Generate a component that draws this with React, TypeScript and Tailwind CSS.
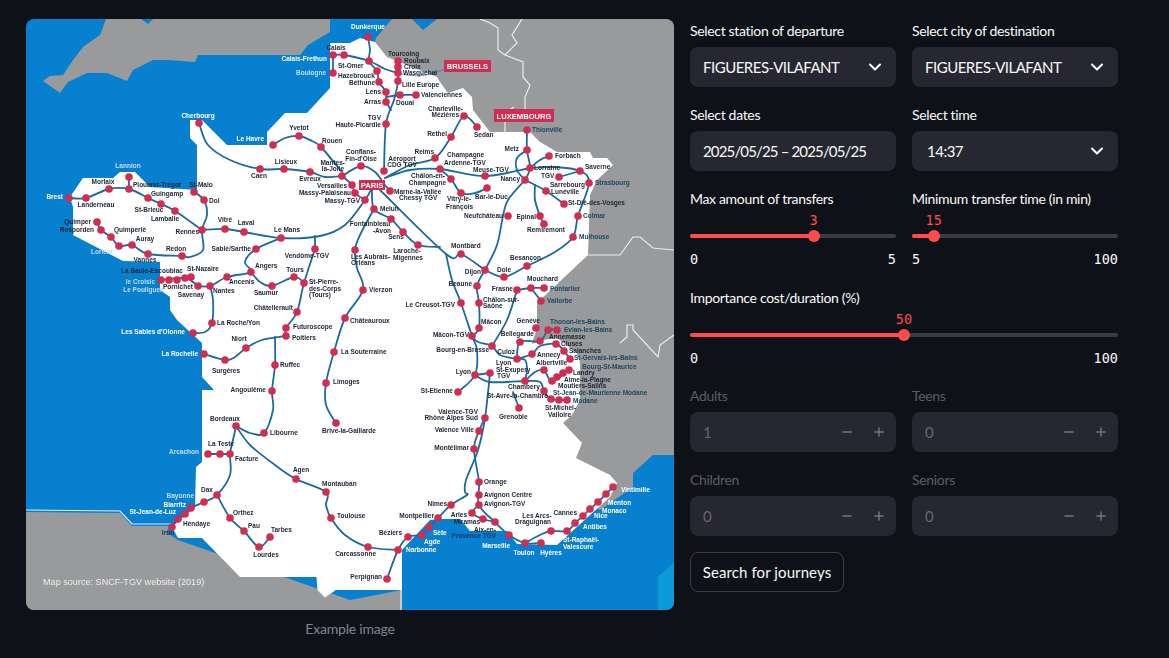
import { ChevronDown, Minus, Plus } from "lucide-react";

type Pt = [number, number];
type Label = [string, number, number, "start" | "middle" | "end", string?];

const WHITE = "#ffffff";
const PALE = "#c4dff3";
const SLATE = "#1d4660";

const land =
  "350,43 360,38 375,42 387,57 437,77 440,82 448,93 463,88 472,97 473,110 490,132 530,132 540,142 557,152 590,152 593,158 607,158 613,165 597,180 590,195 588,255 537,303 537,330 534,337 532,344 543,340 557,338 577,353 580,362 580,400 572,415 563,423 582,443 576,458 610,475 617,483 610,497 557,545 517,544 507,531 470,531 460,519 440,519 430,520 402,550 402,590 335,590 325,597 318,590 317,577 240,577 202,538 178,538 172,527 195,507 196,467 202,462 202,390 214,390 202,377 202,343 177,320 170,310 170,297 160,290 160,262 123,261 73,235 73,207 70,197 83,178 113,178 120,172 135,172 150,187 197,190 197,145 190,138 190,120 202,120 227,145 267,145 267,132 285,113 307,113 330,88 330,43";

const routes: Pt[][] = [
  [[333, 55], [344, 55], [369, 61], [385, 69], [398, 73]],
  [[333, 55], [333, 73]],
  [[368, 37], [370, 50], [369, 61], [377, 71], [379, 82], [386, 92], [386, 102]],
  [[398, 61], [398, 81], [394, 100], [386, 124], [384, 171]],
  [[386, 102], [391, 110]],
  [[386, 97], [400, 95], [416, 95]],
  [[273, 145], [285, 138], [299, 136], [312, 141], [321, 147], [342, 172]],
  [[199, 123], [208, 145], [230, 160], [260, 169], [284, 169], [310, 172], [325, 177], [342, 176]],
  [[342, 176], [361, 166], [375, 172], [384, 184], [390, 191]],
  [[342, 176], [352, 185], [355, 193], [365, 200]],
  [[372, 188], [365, 200], [345, 225], [320, 236], [281, 238], [244, 232], [225, 229], [202, 230]],
  [[69, 198], [86, 198], [109, 189], [129, 189], [148, 198], [161, 204], [175, 211], [202, 230]],
  [[129, 177], [129, 189]],
  [[194, 192], [204, 200], [207, 215], [202, 230], [203, 250], [190, 257], [182, 256], [148, 254], [132, 245], [119, 246], [111, 237], [101, 230], [97, 222]],
  [[281, 238], [256, 249], [245, 262], [251, 272], [227, 277], [210, 286], [198, 286]],
  [[198, 286], [185, 278], [161, 280]],
  [[191, 277], [185, 278]],
  [[251, 272], [260, 282], [272, 286], [294, 277], [304, 283]],
  [[315, 236], [315, 249]],
  [[315, 249], [304, 283], [297, 312], [286, 328], [286, 336]],
  [[286, 336], [262, 340], [246, 348], [235, 357], [225, 360], [204, 354]],
  [[275, 337], [275, 365], [272, 391], [273, 410], [264, 433], [250, 433], [236, 426]],
  [[236, 426], [250, 445], [275, 465], [296, 479], [326, 492], [326, 505], [331, 518], [345, 535], [368, 547], [398, 550]],
  [[236, 426], [233, 440], [230, 454], [230, 475], [217, 495], [204, 502], [191, 508], [185, 514], [178, 519], [172, 527]],
  [[208, 454], [230, 454]],
  [[217, 495], [230, 518], [244, 531], [259, 547], [270, 537]],
  [[210, 286], [213, 300], [212, 323], [205, 332], [193, 333]],
  [[374, 209], [360, 235], [355, 250], [357, 268], [363, 290], [345, 318], [334, 352], [326, 383], [326, 405], [336, 423]],
  [[372, 188], [374, 209], [391, 219], [403, 232], [418, 245], [440, 247]],
  [[378, 188], [446, 254], [461, 254], [485, 270]],
  [[446, 254], [452, 280], [461, 303], [472, 336], [477, 350], [475, 375], [458, 392]],
  [[385, 178], [410, 165], [435, 158], [451, 137], [464, 116], [477, 127]],
  [[385, 178], [410, 170], [440, 169], [485, 176], [530, 168]],
  [[440, 169], [451, 179], [461, 193], [475, 193], [487, 188]],
  [[527, 130], [527, 150], [530, 168], [525, 180]],
  [[527, 150], [517, 158], [517, 170], [525, 180]],
  [[530, 168], [540, 160], [549, 156]],
  [[530, 168], [555, 167], [580, 171], [589, 183], [578, 216], [573, 237], [555, 252], [527, 266], [504, 277], [485, 270]],
  [[580, 171], [559, 177]],
  [[525, 180], [546, 191], [564, 204]],
  [[535, 185], [535, 200], [540, 216], [544, 224]],
  [[525, 180], [508, 200], [503, 216], [497, 245], [485, 270]],
  [[485, 270], [477, 286], [479, 303], [479, 328], [472, 336]],
  [[517, 290], [507, 320], [492, 346]],
  [[517, 290], [531, 288], [544, 288]],
  [[531, 288], [541, 301]],
  [[472, 336], [478, 342], [492, 346], [500, 355], [517, 359]],
  [[517, 359], [520, 342], [540, 341], [548, 330], [557, 330]],
  [[517, 359], [532, 354], [540, 346], [556, 344], [564, 351], [570, 359]],
  [[517, 359], [525, 360], [527, 370], [525, 381]],
  [[475, 375], [490, 373]],
  [[475, 375], [490, 382], [525, 381]],
  [[525, 381], [535, 372], [544, 370], [552, 381], [569, 370]],
  [[525, 381], [540, 382], [544, 391], [551, 399], [567, 400]],
  [[513, 392], [519, 408]],
  [[490, 373], [485, 418], [478, 450], [466, 480], [465, 492], [467, 495], [451, 505], [438, 518], [429, 527], [422, 535], [408, 537], [398, 550], [387, 579]],
  [[485, 418], [479, 431], [474, 449], [479, 482], [479, 505], [495, 522], [509, 535], [525, 543], [541, 543]],
  [[479, 505], [472, 513], [483, 519], [495, 522]],
  [[525, 543], [540, 535], [551, 531], [567, 531], [575, 523], [583, 516], [590, 509], [598, 502], [606, 494], [613, 487]],
];

const stations: Pt[] = [
  [333, 55], [344, 55], [333, 73], [199, 123], [273, 145], [299, 136], [321, 147], [260, 169], [284, 169], [310, 172], [342, 176],
  [69, 198], [86, 198], [109, 189], [129, 177], [129, 189], [148, 198], [161, 204], [175, 211], [194, 192], [204, 200], [202, 230],
  [225, 229], [244, 232], [281, 238], [97, 222], [101, 230], [111, 237], [119, 246], [132, 245], [148, 254], [182, 256], [256, 249],
  [315, 249], [251, 272], [294, 277], [304, 283], [272, 286], [227, 277], [210, 286], [198, 286], [191, 277], [185, 278], [177, 280],
  [169, 280], [161, 280], [297, 312], [212, 323], [193, 333], [204, 354], [225, 360], [246, 348], [286, 328], [286, 336], [275, 365],
  [272, 391], [264, 433], [236, 426], [208, 454], [220, 454], [230, 454], [296, 479], [326, 492], [331, 518], [217, 495], [204, 502],
  [191, 508], [185, 514], [178, 519], [172, 527], [230, 518], [244, 531], [259, 547], [270, 537], [334, 352], [326, 383], [336, 423],
  [345, 318], [363, 290], [355, 250], [374, 209], [391, 219], [403, 232], [418, 245], [365, 200], [355, 193], [352, 185], [361, 166],
  [384, 171], [390, 191], [386, 124], [368, 37], [369, 61], [377, 71], [379, 82], [386, 92], [386, 102], [400, 95], [416, 95], [398, 61],
  [398, 67], [398, 73], [398, 81], [464, 116], [477, 127], [451, 137], [435, 158], [440, 169], [451, 179], [461, 193], [487, 188],
  [485, 176], [530, 168], [525, 180], [527, 150], [527, 130], [549, 156], [580, 171], [559, 177], [589, 183], [546, 191], [564, 204],
  [578, 216], [573, 237], [540, 216], [544, 224], [508, 216], [461, 254], [485, 270], [504, 277], [527, 266], [477, 286], [517, 290],
  [531, 288], [544, 288], [541, 301], [479, 303], [461, 303], [479, 328], [472, 336], [492, 346], [536, 328], [548, 330], [557, 330],
  [520, 342], [540, 341], [556, 344], [564, 351], [570, 359], [532, 354], [517, 359], [544, 370], [569, 370], [563, 373], [557, 377],
  [552, 381], [525, 381], [544, 391], [567, 400], [559, 400], [551, 399], [519, 408], [475, 375], [490, 373], [458, 392], [485, 418],
  [479, 431], [474, 449], [479, 482], [479, 495], [479, 505], [451, 505], [472, 513], [483, 519], [495, 522], [438, 518], [429, 527],
  [422, 535], [408, 537], [398, 550], [368, 547], [387, 579], [509, 535], [525, 543], [541, 543], [551, 531], [567, 531], [575, 523],
  [583, 516], [590, 509], [598, 502], [606, 494], [613, 487],
];

const labels: Label[] = [
  ["Dunkerque", 368, 29, "middle", WHITE], ["Calais", 336, 50, "middle"], ["Calais-Frethun", 327, 61, "end", WHITE], ["Boulogne", 326, 75, "end", PALE],
  ["St-Omer", 338, 68, "start"], ["Hazebrouck", 338, 78, "start"], ["Béthune", 349, 85, "start"], ["Lens", 381, 94, "end"], ["Arras", 381, 104, "end"],
  ["Douai", 396, 105, "start"], ["Valenciennes", 421, 97, "start"], ["Tourcoing", 388, 56, "start"], ["Roubaix", 404, 63, "start"], ["Croix", 404, 69, "start"],
  ["Wasquehal", 403, 75, "start"], ["Lille Europe", 402, 87, "start"], ["TGV", 381, 120, "end"], ["Haute-Picardie", 381, 127, "end"],
  ["Charleville-", 463, 111, "end"], ["Mézières", 459, 117, "end"], ["Sedan", 474, 137, "start"], ["Rethel", 447, 136, "end"], ["Reims", 434, 154, "end"],
  ["Champagne", 447, 157, "start"], ["Ardenne-TGV", 444, 165, "start"], ["Châlon-en-", 445, 178, "end"], ["Champagne", 446, 185, "end"],
  ["Vitry-le-", 447, 201, "start"], ["François", 446, 209, "start"], ["Bar-le-Duc", 475, 199, "start"], ["Meuse-TGV", 473, 172, "start"], ["Metz", 519, 151, "end"],
  ["Thionville", 532, 132, "start", SLATE], ["Forbach", 555, 158, "start"], ["Lorraine", 534, 170, "start"], ["TGV", 541, 178, "start"], ["Nancy", 520, 181, "end"],
  ["Saverne", 585, 169, "start"], ["Strasbourg", 595, 185, "start", SLATE], ["Sarrebourg", 550, 187, "start"], ["Lunéville", 551, 194, "start"],
  ["St-Dié-des-Vosges", 568, 205, "start"], ["Colmar", 583, 218, "start", SLATE], ["Mulhouse", 579, 239, "start", SLATE], ["Epinal", 536, 219, "end"],
  ["Remiremont", 565, 232, "end"], ["Neufchâteau", 503, 218, "end"], ["Montbard", 451, 248, "start"], ["Besançon", 510, 260, "start"], ["Dole", 497, 272, "start"],
  ["Dijon", 481, 274, "end"], ["Beaune", 472, 286, "end"], ["Mouchard", 527, 281, "start"], ["Frasne", 513, 291, "end"], ["Pontarlier", 550, 291, "start", SLATE],
  ["Vallorbe", 547, 303, "start", SLATE], ["Châlon-sur-", 483, 302, "start"], ["Saône", 483, 308, "start"], ["Le Creusot-TGV", 455, 307, "end"], ["Mâcon", 481, 324, "start"],
  ["Mâcon-TGV", 469, 337, "end"], ["Bourg-en-Bresse", 489, 352, "end"], ["Genève", 540, 323, "end"], ["Thonon-les-Bains", 550, 324, "start", SLATE],
  ["Evian-les-Bains", 564, 332, "start", SLATE], ["Annemasse", 549, 339, "start"], ["Bellegarde", 534, 336, "end"], ["Cluses", 561, 346, "start"], ["Salanches", 569, 353, "start"],
  ["St-Gervais-les-Bains", 574, 360, "start", SLATE], ["Annecy", 537, 357, "start"], ["Culoz", 515, 354, "end"], ["Albertville", 536, 365, "start"],
  ["Bourg-St-Maurice", 582, 369, "start", SLATE], ["Landry", 573, 375, "start"], ["Aime-la-Plagne", 564, 382, "start"], ["Moutiers-Salins", 558, 388, "start"],
  ["St-Jean-de-Maurienne Modane", 553, 395, "start", SLATE], ["Modane", 573, 403, "start", SLATE], ["St-Michel-", 545, 410, "start"], ["Valloire", 548, 417, "start"],
  ["Lyon", 496, 365, "start"], ["St-Exupery", 496, 372, "start"], ["TGV", 497, 378, "start"], ["Lyon", 471, 374, "end"], ["Chambery", 508, 389, "start"],
  ["St-Avre-la-Chambre", 487, 398, "start"], ["Grenoble", 499, 419, "start"], ["St-Etienne", 453, 393, "end"], ["Valence-TGV", 478, 414, "end"], ["Rhône Alpes Sud", 478, 420, "end"],
  ["Valence Ville", 474, 432, "end"], ["Montélimar", 469, 450, "end"], ["Orange", 484, 484, "start"], ["Avignon Centre", 484, 497, "start"], ["Avignon-TGV", 484, 506, "start"],
  ["Nîmes", 447, 506, "end"], ["Montpellier", 434, 518, "end"], ["Arles", 467, 517, "end"], ["Miramas", 480, 524, "end"], ["Aix-en-", 496, 532, "end"], ["Provence TGV", 496, 538, "end", "#0d3c66"],
  ["Béziers", 402, 535, "end"], ["Narbonne", 406, 552, "start", WHITE], ["Sète", 433, 535, "start", WHITE], ["Agde", 424, 544, "start", WHITE], ["Carcassonne", 376, 556, "end"],
  ["Perpignan", 382, 579, "end"], ["Marseille", 510, 548, "end", WHITE], ["Toulon", 524, 555, "middle", WHITE], ["Hyères", 551, 555, "middle", WHITE], ["Les Arcs-", 537, 518, "middle"],
  ["Draguignan", 533, 524, "middle"], ["Cannes", 577, 515, "end"], ["St-Raphaël-", 563, 542, "start", WHITE], ["Valescure", 563, 549, "start", WHITE], ["Antibes", 583, 529, "start", WHITE],
  ["Nice", 594, 518, "start", WHITE], ["Monaco", 602, 513, "start", WHITE], ["Menton", 608, 505, "start", WHITE], ["Vintimille", 621, 492, "start", WHITE],
  ["Cherbourg", 198, 118, "middle", WHITE], ["Le Havre", 264, 141, "end", WHITE], ["Yvetot", 299, 130, "middle"], ["Rouen", 322, 143, "start"], ["Lisieux", 286, 164, "middle"],
  ["Caen", 259, 178, "middle"], ["Evreux", 310, 181, "middle"], ["Mantes-", 345, 165, "end"], ["la-Jolie", 344, 171, "end"], ["Conflans-", 361, 154, "middle"], ["Fin-d'Oise", 361, 161, "middle"],
  ["Aéroport", 402, 161, "middle"], ["CDG TGV", 402, 167, "middle"], ["Versailles", 347, 188, "end"], ["Massy-Palaiseau", 351, 195, "end"], ["Massy-TGV", 360, 203, "end"],
  ["Marne-la-Vallée", 394, 194, "start"], ["Chessy TGV", 399, 200, "start"], ["Melun", 380, 211, "start"], ["Fontainbleau", 370, 226, "middle"], ["-Avon", 382, 233, "middle"],
  ["Sens", 396, 239, "middle"], ["Laroche-", 407, 253, "middle"], ["Migennes", 408, 260, "middle"], ["Les Aubrais-", 351, 259, "start"], ["Orléans", 351, 265, "start"], ["Vierzon", 369, 292, "start"],
  ["Le Mans", 287, 232, "middle"], ["Laval", 246, 225, "middle"], ["Vitré", 225, 222, "middle"], ["Sablé/Sarthe", 251, 251, "end"], ["Vendôme-TGV", 307, 258, "middle"], ["Angers", 255, 268, "start"],
  ["Tours", 295, 272, "middle"], ["St-Pierre-", 309, 284, "start"], ["des-Corps", 309, 291, "start"], ["(Tours)", 309, 297, "start"], ["Saumur", 266, 295, "middle"], ["Ancenis", 229, 284, "start"],
  ["Nantes", 213, 293, "start"], ["Savenay", 191, 297, "middle"], ["St-Nazaire", 203, 271, "middle"], ["La Baule-Escoublac", 152, 273, "middle"], ["le Croisic", 155, 284, "end", PALE],
  ["Le Pouliguen", 164, 292, "end", PALE], ["Pornichet", 163, 289, "start"], ["Châtellerault", 293, 310, "end"], ["Lannion", 128, 168, "middle", PALE], ["Morlaix", 103, 184, "middle"],
  ["Plouaret-Trégor", 133, 187, "start"], ["Guingamp", 151, 196, "start"], ["St-Malo", 201, 187, "middle"], ["Dol", 209, 203, "start"], ["Brest", 63, 199, "end", WHITE],
  ["Landerneau", 96, 207, "middle"], ["St-Brieuc", 149, 212, "middle"], ["Lamballe", 165, 221, "middle"], ["Rennes", 199, 234, "end"], ["Quimper", 91, 224, "end"], ["Rosporden", 94, 232, "end"],
  ["Quimperlé", 130, 232, "middle"], ["Auray", 145, 241, "middle"], ["Lorient", 113, 254, "end", PALE], ["Vannes", 145, 262, "middle"], ["Redon", 176, 251, "middle"],
  ["La Roche/Yon", 217, 325, "start"], ["Les Sables d'Olonne", 185, 334, "end", WHITE], ["La Rochelle", 198, 356, "end", WHITE], ["Surgères", 226, 373, "middle"], ["Niort", 239, 341, "middle"],
  ["Futuroscope", 293, 329, "start"], ["Poitiers", 292, 340, "start"], ["Ruffec", 280, 367, "start"], ["Angoulême", 266, 392, "end"], ["Libourne", 270, 435, "start"], ["Bordeaux", 225, 421, "middle"],
  ["La Teste", 221, 446, "middle"], ["Arcachon", 199, 454, "end", PALE], ["Facture", 235, 461, "start"], ["Agen", 301, 472, "middle"], ["Montauban", 322, 486, "start"], ["Toulouse", 337, 518, "start"],
  ["Dax", 207, 492, "middle"], ["Bayonne", 194, 498, "end", PALE], ["Biarritz", 186, 507, "end", WHITE], ["St-Jean-de-Luz", 176, 514, "end", WHITE], ["Hendaye", 183, 526, "start"],
  ["Irun", 168, 535, "middle", "#0d3c66"], ["Orthez", 233, 515, "start"], ["Pau", 248, 528, "start"], ["Tarbes", 271, 532, "start"], ["Lourdes", 266, 557, "middle"],
  ["La Souterraine", 341, 354, "start"], ["Limoges", 333, 384, "start"], ["Brive-la-Gaillarde", 349, 433, "middle"], ["Châteauroux", 350, 323, "start"],
];

// catmull-rom through the stops, so the routes bend the way the map does
function smooth(p: Pt[]) {
  let d = `M${p[0][0]} ${p[0][1]}`;
  for (let i = 0; i < p.length - 1; i++) {
    const a = p[i - 1] ?? p[i];
    const b = p[i];
    const c = p[i + 1];
    const e = p[i + 2] ?? c;
    d += `C${b[0] + (c[0] - a[0]) / 6} ${b[1] + (c[1] - a[1]) / 6} ${c[0] - (e[0] - b[0]) / 6} ${c[1] - (e[1] - b[1]) / 6} ${c[0]} ${c[1]}`;
  }
  return d;
}

function RouteMap() {
  return (
    <svg viewBox="26 19 648 591" className="block h-[591px] w-[648px] rounded-lg blur-[0.4px]">
      <rect x="26" y="19" width="648" height="591" fill="#0680cf" />
      <polygon points="658,610 658,577 674,562 674,610" fill="#0a9bd8" />
      <polygon points="106,19 100,35 83,47 73,60 63,75 50,76 43,81 60,93 68,82 87,73 107,73 127,81 133,70 153,60 168,60 195,62 198,55 300,55 308,45 330,32 330,19 153,19 148,24 141,19" fill="#999a9c" />
      <polygon points="392,19 376,38 370,60 400,400 600,510 633,487 633,473 653,455 674,455 674,19 437,19 423,30 412,19" fill="#999a9c" />
      <polygon points="26,512 120,513 132,526 170,526 166,532 178,540 350,600 402,590 402,610 26,610" fill="#999a9c" />
      <polygon points={land} fill="#ffffff" />
      <g fill="none" stroke="#e8edf0" strokeWidth="1.2">
        <polyline points="480,19 490,23 498,28 498,50 505,55 517,43 512,35 522,19" />
        <polyline points="505,55 523,62 523,77 530,85 525,97 525,110" />
        <polyline points="514,107 505,113 505,132" />
        <polyline points="588,255 620,255 633,237 640,237 653,248 674,250" />
        <polyline points="620,343 627,337 627,325 633,325 633,330 658,357 660,345 674,335" />
        <polyline points="26,510 120,511 132,524 172,524" />
        <polyline points="317,577 318,590 325,597 335,590" />
        <line x1="401" y1="590" x2="401" y2="610" />
      </g>
      <g fill="none" stroke="#1b6a9c" strokeWidth="1.8" strokeLinecap="round" strokeLinejoin="round">
        {routes.map((r, i) => (
          <path key={i} d={smooth(r)} />
        ))}
      </g>
      <path d="M398 73C415 78 430 76 444 69" fill="none" stroke="#1b6a9c" strokeWidth="0.7" />
      <g fill="#d22c50">
        {stations.map(([x, y], i) => (
          <circle key={i} cx={x} cy={y} r="3.8" />
        ))}
        <rect x="359" y="180" width="26" height="10" />
        <rect x="444" y="60" width="47" height="12" />
        <rect x="494" y="109" width="60" height="13" />
      </g>
      <g fontFamily="'Liberation Sans', sans-serif" fontWeight="700" fontSize="6.5">
        {labels.map(([t, x, y, a, c], i) => (
          <text key={i} x={x} y={y} textAnchor={a} fill={c ?? "#1c2433"}>
            {t}
          </text>
        ))}
      </g>
      <g fontFamily="'Liberation Sans', sans-serif" fontWeight="700" fill="#ffffff" textAnchor="middle" fontSize="7.6">
        <text x="372" y="188">PARIS</text>
        <text x="467.5" y="69">BRUSSELS</text>
        <text x="524" y="118.5">LUXEMBOURG</text>
      </g>
      <text x="43" y="585" fontFamily="'Liberation Sans', sans-serif" fontSize="9.1" fill="#eeeeee">
        Map source: SNCF-TGV website (2019)
      </text>
    </svg>
  );
}

function FieldLabel({ children, off }: { children: string; off?: boolean }) {
  return <div className={`h-7 whitespace-nowrap pt-[2px] text-sm leading-5 tracking-[-0.33px] ${off ? "text-[#5c5d63]" : "text-[#fafafa]"}`}>{children}</div>;
}

function SelectBox({ label, value, indent }: { label: string; value: string; indent?: boolean }) {
  return (
    <div>
      <FieldLabel>{label}</FieldLabel>
      <div className={`flex h-10 items-center justify-between rounded-lg bg-[#262730] pr-[11px] text-[15px] tracking-[-0.5px] text-[#fafafa] ${indent ? "pl-[15px]" : "pl-[13px]"}`}>
        <span className="whitespace-nowrap">{value}</span>
        <ChevronDown size={20} strokeWidth={2.5} />
      </div>
    </div>
  );
}

function DateBox({ label, value }: { label: string; value: string }) {
  return (
    <div>
      <FieldLabel>{label}</FieldLabel>
      <div className="flex h-10 items-center rounded-lg bg-[#262730] pl-[13px] text-[15px] tracking-[-0.85px] text-[#fafafa]">
        <span className="whitespace-nowrap">{value}</span>
      </div>
    </div>
  );
}

function Slider({ label, min, max, value }: { label: string; min: number; max: number; value: number }) {
  const pct = ((value - min) / (max - min)) * 100;
  return (
    <div>
      <FieldLabel>{label}</FieldLabel>
      <div className="relative pt-[19px]">
        <div className="h-1 rounded-full bg-[#3a3b44]">
          <div className="h-1 rounded-full bg-[#ff4b4b]" style={{ width: `${pct}%` }} />
        </div>
        <div className="absolute top-[15px] size-3 -translate-x-1/2 rounded-full bg-[#ff4b4b]" style={{ left: `${pct}%` }} />
        <div
          className="absolute top-[-4px] -translate-x-1/2 font-['DejaVu_Sans_Mono',monospace] text-[13.5px] leading-[18px] text-[#ff4b4b]"
          style={{ left: `${pct}%` }}
        >
          {value}
        </div>
      </div>
      <div className="mt-3 mb-[1px] flex h-[18px] justify-between font-['DejaVu_Sans_Mono',monospace] text-[13.5px] leading-[18px] text-[#fafafa]">
        <span>{min}</span>
        <span>{max}</span>
      </div>
    </div>
  );
}

function Stepper({ label, value }: { label: string; value: number }) {
  return (
    <div>
      <FieldLabel off>{label}</FieldLabel>
      <div className="flex h-10 items-center rounded-lg bg-[#262730] pl-[13px] pr-[10px] text-[15px] text-[#66676e]">
        <span className="flex-1">{value}</span>
        <span className="flex items-center gap-[18px] text-[#75767c]">
          <Minus size={14} strokeWidth={2.5} />
          <Plus size={14} strokeWidth={2.5} />
        </span>
      </div>
    </div>
  );
}

export default function App() {
  return (
    <main className="flex h-[658px] gap-4 overflow-hidden bg-[#0e1117] pl-[26px] pt-[19px] font-['Lato',sans-serif]">
      <section className="w-[648px]">
        <RouteMap />
        <p className="mt-[9px] text-center text-sm leading-5 tracking-[-0.2px] text-[#808495]">Example image</p>
      </section>

      <section className="flex w-[428px] flex-col gap-4">
        <div className="grid grid-cols-2 gap-4">
          <SelectBox label="Select station of departure" value="FIGUERES-VILAFANT" />
          <SelectBox label="Select city of destination" value="FIGUERES-VILAFANT" />
        </div>
        <div className="grid grid-cols-2 gap-4">
          <DateBox label="Select dates" value="2025/05/25 – 2025/05/25" />
          <SelectBox label="Select time" value="14:37" indent />
        </div>
        <div className="mb-[1px] grid grid-cols-2 gap-4">
          <Slider label="Max amount of transfers" min={0} max={5} value={3} />
          <Slider label="Minimum transfer time (in min)" min={5} max={100} value={15} />
        </div>
        <Slider label="Importance cost/duration (%)" min={0} max={100} value={50} />
        <div className="grid grid-cols-2 gap-4">
          <Stepper label="Adults" value={1} />
          <Stepper label="Teens" value={0} />
        </div>
        <div className="grid grid-cols-2 gap-4">
          <Stepper label="Children" value={0} />
          <Stepper label="Seniors" value={0} />
        </div>
        <button className="h-10 w-[154px] rounded-lg border border-[#3d3f48] text-[15px] tracking-[0.1px] text-[#fafafa]">Search for journeys</button>
      </section>
    </main>
  );
}
